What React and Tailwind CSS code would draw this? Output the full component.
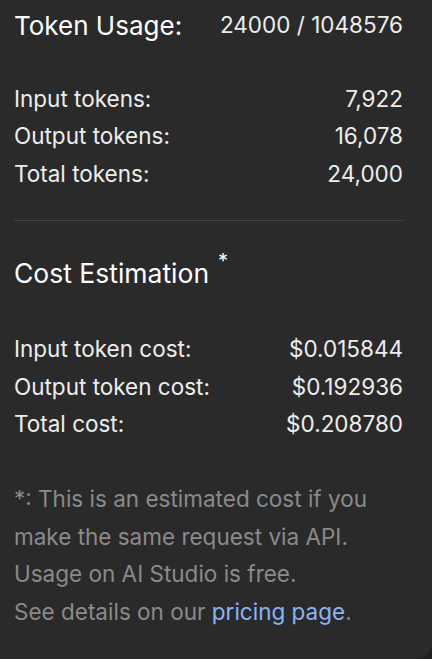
export default function App() {
  const font = { fontFamily: 'Inter, "Noto Sans", sans-serif' };
  const Row = ({ label, value }) => (
    <div className="flex justify-between items-center h-[37.5px] text-[22.5px] text-[#ededed]">
      <span>{label}</span>
      <span>{value}</span>
    </div>
  );
  return (
    <div className="w-[432px] h-[659px] bg-[#1f1f1f]" style={font}>
      <div className="w-full h-full bg-[#2a2a2a] rounded-br-[16px] pl-[14px] pr-[29px] flex flex-col">
        <div className="flex justify-between items-center h-[50px]">
          <span className="text-[26px] font-normal text-white">Token Usage:</span>
          <span className="text-[22.5px] text-[#ededed]">24000 / 1048576</span>
        </div>
        <div className="mt-[30px]">
          <Row label="Input tokens:" value="7,922" />
          <Row label="Output tokens:" value="16,078" />
          <Row label="Total tokens:" value="24,000" />
        </div>
        <div className="mt-[27px] h-px bg-[#444444]" />
        <div className="mt-[31px] h-[44px] flex items-center">
          <span className="text-[26.5px] font-normal text-white relative">
            Cost Estimation<span className="absolute left-full ml-[9px] top-[-8px] text-[20px]">*</span>
          </span>
        </div>
        <div className="mt-[35px]">
          <Row label="Input token cost:" value="$0.015844" />
          <Row label="Output token cost:" value="$0.192936" />
          <Row label="Total cost:" value="$0.208780" />
        </div>
        <div className="mt-[37px] text-[22.5px] leading-[37.5px] text-[#8a8a8a]">
          <div>*: This is an estimated cost if you</div>
          <div>make the same request via API.</div>
          <div>Usage on AI Studio is free.</div>
          <div>
            See details on our <a className="text-[#8ab4f8]">pricing page</a>.
          </div>
        </div>
      </div>
    </div>
  );
}
